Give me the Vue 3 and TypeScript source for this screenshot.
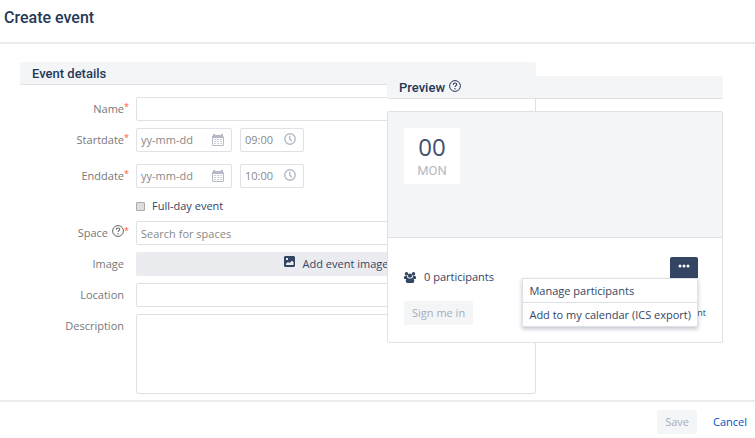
<script setup lang="ts">
import { ref } from 'vue'

const name = ref('')
const startDate = ref('')
const startTime = ref('09:00')
const endDate = ref('')
const endTime = ref('10:00')
const fullDay = ref(false)
const space = ref('')
const location = ref('')
const description = ref('')
const menuItems: string[] = ['Manage participants', 'Add to my calendar (ICS export)']
</script>

<template>
  <div class="page">
    <header class="page-header">
      <h1>Create event</h1>
    </header>

    <main class="content">
      <form id="event-form" class="details" @submit.prevent>
        <h2 class="section-title">Event details</h2>
        <div class="rows">
          <div class="row">
            <label class="label" for="name">Name<span class="star">*</span></label>
            <input id="name" v-model="name" class="field" type="text" />
          </div>

          <div class="row">
            <label class="label" for="start-date">Startdate<span class="star">*</span></label>
            <div class="when">
              <div class="field date">
                <input id="start-date" v-model="startDate" type="text" placeholder="yy-mm-dd" />
                <svg class="calendar" viewBox="0 0 12 12" aria-hidden="true">
                  <path fill="currentColor" fill-rule="evenodd" d="M1 2V0h2v1h6V0h2v2l1 1v8l-1 1H1l-1-1V2zM1 4v7h10V4z" />
                  <path fill="currentColor" d="M2 5h2v1H2zM5 5h2v1H5zM8 5h2v1H8zM2 7h2v1H2zM5 7h2v1H5zM8 7h2v1H8zM2 9h2v1H2zM5 9h2v1H5zM8 9h2v1H8z" opacity=".7" />
                </svg>
              </div>
              <div class="field time">
                <input v-model="startTime" type="text" aria-label="Start time" />
                <svg class="clock" viewBox="0 0 12 12" aria-hidden="true">
                  <circle cx="6" cy="6" r="5.2" fill="none" stroke="currentColor" stroke-width="1.4" />
                  <path d="M5.8 2.700V6l2 2.300" fill="none" stroke="currentColor" stroke-width="1.4" />
                </svg>
              </div>
            </div>
          </div>

          <div class="row end-row">
            <label class="label" for="end-date">Enddate<span class="star">*</span></label>
            <div class="when">
              <div class="field date">
                <input id="end-date" v-model="endDate" type="text" placeholder="yy-mm-dd" />
                <svg class="calendar" viewBox="0 0 12 12" aria-hidden="true">
                  <path fill="currentColor" fill-rule="evenodd" d="M1 2V0h2v1h6V0h2v2l1 1v8l-1 1H1l-1-1V2zM1 4v7h10V4z" />
                  <path fill="currentColor" d="M2 5h2v1H2zM5 5h2v1H5zM8 5h2v1H8zM2 7h2v1H2zM5 7h2v1H5zM8 7h2v1H8zM2 9h2v1H2zM5 9h2v1H5zM8 9h2v1H8z" opacity=".7" />
                </svg>
              </div>
              <div class="field time">
                <input v-model="endTime" type="text" aria-label="End time" />
                <svg class="clock" viewBox="0 0 12 12" aria-hidden="true">
                  <circle cx="6" cy="6" r="5.2" fill="none" stroke="currentColor" stroke-width="1.4" />
                  <path d="M5.8 2.700V6l2 2.300" fill="none" stroke="currentColor" stroke-width="1.4" />
                </svg>
              </div>
            </div>
          </div>

          <div class="row full-day-row">
            <label class="full-day">
              <input v-model="fullDay" type="checkbox" />
              <span>Full-day event</span>
            </label>
          </div>

          <div class="row">
            <label class="label" for="space">
              Space
              <svg class="help" viewBox="0 0 12 12" aria-hidden="true">
                <circle cx="6" cy="6" r="5.4" fill="none" stroke="currentColor" />
                <path d="M4.3 4.7C4.3 2.3 7.8 2.5 7.7 4.5C7.7 5.6 6 5.7 6 7.1" fill="none" stroke="currentColor" stroke-width="1.1" />
                <circle cx="6" cy="8.8" r=".7" fill="currentColor" />
              </svg><span class="star">*</span>
            </label>
            <input id="space" v-model="space" class="field" type="text" placeholder="Search for spaces" />
          </div>

          <div class="row">
            <span class="label">Image</span>
            <button class="image-button" type="button">
              <svg class="picture" viewBox="0 0 11 11" aria-hidden="true">
                <path fill="currentColor" fill-rule="evenodd" d="M1 0h9l1 1v9l-1 1H1l-1-1V1zM2 2v2h2V2zM2 9h7.500V6L8 4.800 5.500 7 4 6 2 7.800z" />
              </svg>
              <span>Add event image</span>
            </button>
          </div>

          <div class="row">
            <label class="label" for="location">Location</label>
            <input id="location" v-model="location" class="field" type="text" />
          </div>

          <div class="row">
            <label class="label" for="description">Description</label>
            <textarea id="description" v-model="description" class="field area"></textarea>
          </div>
        </div>
      </form>

      <aside class="preview">
        <h2 class="section-title">
          Preview
          <svg class="help" viewBox="0 0 12 12" aria-hidden="true">
            <circle cx="6" cy="6" r="5.4" fill="none" stroke="currentColor" />
            <path d="M4.3 4.7C4.3 2.3 7.8 2.5 7.7 4.5C7.7 5.6 6 5.7 6 7.1" fill="none" stroke="currentColor" stroke-width="1.1" />
            <circle cx="6" cy="8.8" r=".7" fill="currentColor" />
          </svg>
        </h2>
        <div class="card">
          <div class="cover">
            <div class="day">
              <span class="day-number">00</span>
              <span class="day-name">MON</span>
            </div>
          </div>
          <div class="card-body">
            <div class="line">
              <span class="participants">
                <svg class="people" viewBox="0 0 12 11" aria-hidden="true">
                  <g fill="currentColor">
                    <circle cx="2.500" cy="1.800" r="1.700" />
                    <circle cx="9.500" cy="1.800" r="1.700" />
                    <circle cx="6" cy="3.600" r="2.200" />
                    <path d="M0 6.500V5l1-1.200h2l.5 2L2.500 7H.5zM12 6.500V5l-1-1.200H9l-.5 2L9.500 7h2zM1.700 9.200C1.700 7.300 2.600 6 3.700 6q2.300 1.200 4.600 0c1.100 0 2 1.300 2 3.200q0 1.800-1.800 1.800H3.500q-1.800 0-1.800-1.800z" />
                  </g>
                </svg>
                <span>0 participants</span>
              </span>
              <div class="actions">
                <button class="more" type="button" aria-label="More">
                  <svg viewBox="0 0 12 4" aria-hidden="true">
                    <g fill="currentColor">
                      <circle cx="2" cy="2" r="1.500" />
                      <circle cx="6" cy="2" r="1.500" />
                      <circle cx="10" cy="2" r="1.500" />
                    </g>
                  </svg>
                </button>
                <ul class="menu">
                  <li v-for="item in menuItems" :key="item">
                    <button type="button">{{ item }}</button>
                  </li>
                </ul>
              </div>
            </div>
            <div class="line sign-line">
              <button class="muted-button" type="button" disabled>Sign me in</button>
              <span class="note">nt</span>
            </div>
          </div>
        </div>
      </aside>
    </main>

    <footer class="page-footer">
      <button class="muted-button" type="submit" form="event-form" disabled>Save</button>
      <a class="cancel" href="#">Cancel</a>
    </footer>
  </div>
</template>

<style>
body {
  background: #fff;
}
</style>

<style scoped>
* {
  box-sizing: border-box;
}

.page {
  font: 11px/16px 'Open Sans', 'Noto Sans', sans-serif;
  color: #344563;
}

button,
input,
textarea {
  font: inherit;
  color: inherit;
}

button {
  border: 0;
  cursor: pointer;
}

svg {
  display: block;
  flex: none;
}

.page-header {
  padding: 8px 4px 14px;
  border-bottom: 2px solid #ebecf0;
}

h1 {
  margin: 0;
  font: 500 16px/20px Roboto, sans-serif;
  color: #253858;
}

.content {
  position: relative;
  padding: 18px 32px 6px 20px;
}

.details {
  margin-right: 187px;
}

.section-title {
  display: flex;
  gap: 4px;
  height: 23px;
  margin: 0;
  padding: 0 12px;
  border-bottom: 1px solid #dfe1e6;
  border-radius: 2px;
  background: #f4f5f7;
  font: 500 13px/23px Roboto, sans-serif;
  color: #253858;
}

.rows {
  display: flex;
  flex-direction: column;
  gap: 7px;
  padding-top: 12px;
}

.row {
  display: grid;
  grid-template-columns: 116px 1fr;
  align-items: start;
}

.label {
  display: flex;
  justify-content: flex-end;
  gap: 4px;
  padding-right: 12px;
  line-height: 24px;
  color: #777;
}

.star {
  width: 4px;
  margin-right: -4px;
  margin-left: -4px;
  font-size: 9px;
  line-height: 20px;
  color: #ff5630;
}

.help {
  width: 12px;
  height: 12px;
  margin-top: 4px;
}

.label .help {
  color: #666;
}

.field {
  width: 100%;
  height: 24px;
  padding: 0 4px;
  border: 1px solid #dfe1e6;
  border-radius: 2px;
  background: #fff;
}

.field::placeholder,
.field input::placeholder {
  color: #888;
  opacity: 1;
}

.area {
  display: block;
  height: 80px;
  resize: none;
}

.when {
  display: flex;
  gap: 8px;
}

.when .field {
  display: flex;
  align-items: center;
  color: #b3bac5;
}

.when .date {
  width: 96px;
  padding-right: 7px;
}

.when .time {
  width: 64px;
  padding-right: 7px;
}

.when input {
  flex: 1;
  min-width: 0;
  padding: 0;
  border: 0;
  background: none;
  color: #888;
}

.when .date input {
  font-weight: 500;
}

.calendar,
.clock {
  width: 12px;
  height: 12px;
}

.clock {
  margin-bottom: 2px;
}

.end-row {
  padding-top: 5px;
}

.full-day-row {
  padding: 3px 0 0 116px;
  grid-template-columns: 1fr;
}

.full-day {
  display: flex;
  align-items: center;
  gap: 7px;
}

.full-day input {
  appearance: none;
  width: 9px;
  height: 9px;
  margin: 0;
  border: 1px solid #aaa;
  border-radius: 1px;
  background: #ddd;
}

.full-day input:checked {
  background: #344563;
}

.image-button {
  display: flex;
  align-items: center;
  justify-content: center;
  gap: 8px;
  height: 24px;
  padding: 0;
  border-radius: 2px;
  background: #ebecf0;
}

.picture {
  width: 11px;
  height: 11px;
  margin-bottom: 5px;
}

.preview {
  position: absolute;
  top: 32px;
  right: 32px;
  width: 336px;
}

.card {
  margin-top: 12px;
  border: 1px solid #dfe1e6;
  border-radius: 2px;
  background: #fff;
}

.cover {
  height: 126px;
  padding: 16px;
  border-bottom: 1px solid #dfe1e6;
  background: #f4f5f7;
}

.day {
  display: flex;
  flex-direction: column;
  align-items: center;
  width: 56px;
  height: 56px;
  padding: 7px 0;
  border-radius: 2px;
  background: #fff;
}

.day-number {
  font-size: 24px;
  line-height: 24px;
  color: #42526e;
}

.day-name {
  margin-top: 4px;
  font: 13px/16px Roboto, sans-serif;
  color: #b3bac5;
}

.card-body {
  padding: 19px 16px 17px;
}

.line {
  display: flex;
  align-items: flex-start;
  justify-content: space-between;
}

.participants {
  display: flex;
  align-items: center;
  gap: 8px;
  padding: 12px 0 6px;
}

.people {
  width: 12px;
  height: 11px;
}

.actions {
  position: relative;
  padding-right: 8px;
}

.more {
  display: flex;
  justify-content: center;
  width: 28px;
  height: 21px;
  padding: 7px 0 0;
  border-radius: 2px 2px 0 0;
  background: #344563;
  color: #fff;
}

.more svg {
  width: 12px;
  height: 4px;
}

.menu {
  position: absolute;
  top: 21px;
  right: 8px;
  margin: 0;
  padding: 0;
  border: 1px solid #dfe1e6;
  background: #fff;
  box-shadow: 0 2px 4px rgba(9, 30, 66, 0.25);
  list-style: none;
}

.menu li + li {
  border-top: 1px solid #dfe1e6;
}

.menu button {
  display: block;
  width: 100%;
  padding: 4px 6px 3px;
  background: none;
  text-align: left;
  white-space: nowrap;
}

.sign-line {
  align-items: center;
  margin-top: 10px;
}

.muted-button {
  height: 24px;
  padding: 0 8px;
  border-radius: 2px;
  background: #f4f5f7;
  color: #a5adba;
  cursor: default;
}

.note {
  font-size: 9px;
}

.page-footer {
  display: flex;
  align-items: center;
  justify-content: flex-end;
  gap: 16px;
  padding: 8px 8px 4px;
  border-top: 2px solid #ebecf0;
}

.cancel {
  color: #0052cc;
  text-decoration: none;
}
</style>
